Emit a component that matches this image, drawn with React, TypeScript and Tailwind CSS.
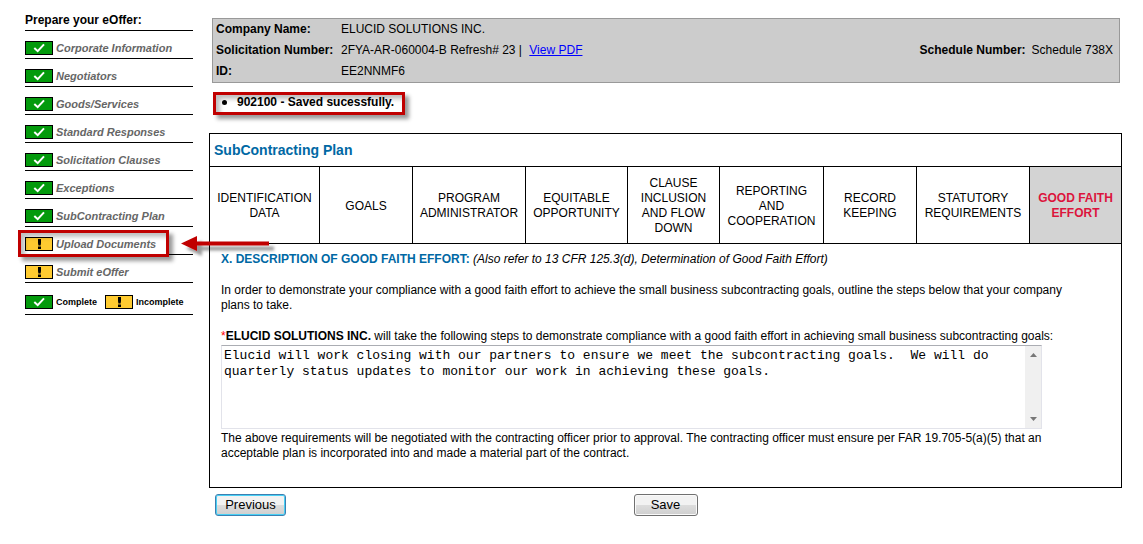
import type { ReactNode } from "react";

type Status = "complete" | "incomplete";

const STEPS: { label: string; status: Status; marked?: boolean }[] = [
  { label: "Corporate Information", status: "complete" },
  { label: "Negotiators", status: "complete" },
  { label: "Goods/Services", status: "complete" },
  { label: "Standard Responses", status: "complete" },
  { label: "Solicitation Clauses", status: "complete" },
  { label: "Exceptions", status: "complete" },
  { label: "SubContracting Plan", status: "complete" },
  { label: "Upload Documents", status: "incomplete", marked: true },
  { label: "Submit eOffer", status: "incomplete" },
];

const TABS = [
  "IDENTIFICATION DATA",
  "GOALS",
  "PROGRAM ADMINISTRATOR",
  "EQUITABLE OPPORTUNITY",
  "CLAUSE INCLUSION AND FLOW DOWN",
  "REPORTING AND COOPERATION",
  "RECORD KEEPING",
  "STATUTORY REQUIREMENTS",
  "GOOD FAITH EFFORT",
];

const PLAN_TEXT =
  "Elucid will work closing with our partners to ensure we meet the subcontracting goals.  We will do quarterly status updates to monitor our work in achieving these goals.";

function StatusIcon({ status }: { status: Status }) {
  return (
    <svg width="28" height="14" viewBox="0 0 28 14" className="shrink-0" aria-hidden="true">
      <rect
        x="0.5"
        y="0.5"
        width="27"
        height="13"
        fill={status === "complete" ? "#039a0c" : "#ffcb30"}
        stroke="#000"
      />
      {status === "complete" ? (
        <path d="M9.300 7l3.400 3.200L19 3.300" fill="none" stroke="#fff" strokeWidth="2" />
      ) : (
        <path d="M13 2h3v4l-.4 2.500h-2.200L13 6zM13 9.600h3V12h-3z" fill="#000" />
      )}
    </svg>
  );
}

function Arrow() {
  return (
    <svg
      width="104"
      height="28"
      viewBox="0 0 104 28"
      className="pointer-events-none absolute top-[6px] left-[155px] z-10"
      aria-hidden="true"
    >
      <defs>
        <filter id="arrow-shadow" x="-10%" y="-30%" width="120%" height="190%">
          <feDropShadow dx="5" dy="5" stdDeviation="1.5" floodColor="#000" floodOpacity="0.4" />
        </filter>
      </defs>
      <path d="M1 10.500L17 3v5.500h72v4H17V18z" fill="#c00000" filter="url(#arrow-shadow)" />
    </svg>
  );
}

function Sidebar() {
  return (
    <aside className="w-[168px] shrink-0">
      <h2 className="border-b border-black pb-[2px] text-[12px] leading-4 font-bold whitespace-nowrap">
        Prepare your eOffer:
      </h2>
      <ul>
        {STEPS.map((step) => (
          <li key={step.label} className="relative flex h-7 items-end border-b border-black pb-[3px]">
            <a
              href="#"
              className="flex h-[14px] items-center gap-[3px] text-[11px] font-bold whitespace-nowrap text-[#666] italic"
            >
              <StatusIcon status={step.status} />
              {step.label}
            </a>
            {step.marked && (
              <>
                <span className="pointer-events-none absolute top-[3px] -left-[7px] h-[27px] w-[151px] border-3 border-[#c00000] shadow-[4px_4px_4px_rgba(0,0,0,0.4),inset_4px_4px_4px_rgba(0,0,0,0.25)]" />
                <Arrow />
              </>
            )}
          </li>
        ))}
      </ul>
      <div className="flex h-8 items-end gap-2 border-b border-black pb-[5px] text-[9px] font-bold">
        <div className="flex h-[14px] items-center gap-[3px]">
          <StatusIcon status="complete" />
          Complete
        </div>
        <div className="flex h-[14px] items-center gap-[3px]">
          <StatusIcon status="incomplete" />
          Incomplete
        </div>
      </div>
    </aside>
  );
}

function OfferHeader() {
  return (
    <header className="mr-[2px] ml-[3px] flex items-center justify-between border border-[#999] bg-[#ccc] pr-[6px] pl-[3px] leading-[21px]">
      <dl className="grid grid-cols-[125px_auto]">
        <dt className="font-bold">Company Name:</dt>
        <dd>ELUCID SOLUTIONS INC.</dd>
        <dt className="font-bold whitespace-nowrap">Solicitation Number:</dt>
        <dd>
          2FYA-AR-060004-B Refresh# 23 |{" "}
          <a href="#" className="ml-1 text-[#0000ff] underline">
            View PDF
          </a>
        </dd>
        <dt className="font-bold">ID:</dt>
        <dd>EE2NNMF6</dd>
      </dl>
      <dl className="flex gap-[6px]">
        <dt className="font-bold">Schedule Number:</dt>
        <dd>Schedule 738X</dd>
      </dl>
    </header>
  );
}

function PushButton({ children, className }: { children: ReactNode; className: string }) {
  return (
    <button
      type="button"
      className={`h-[22px] rounded-[3px] border bg-linear-to-b from-[#f2f2f2] from-50% via-[#dddddd] via-50% to-[#cfcfcf] text-[13px] leading-5 ${className}`}
    >
      {children}
    </button>
  );
}

export default function App() {
  return (
    <div className="flex gap-4 bg-white pr-[21px] pb-7 pl-[25px] font-['Liberation_Sans',Arial,sans-serif] text-[12px] leading-[15px] text-black">
      <div className="pt-3">
        <Sidebar />
      </div>
      <main className="min-w-0 flex-1 pt-[18px]">
        <OfferHeader />

        <ul className="mt-[9px] ml-1 w-[192px] border-3 border-[#c00000] pb-[2px] shadow-[4px_4px_4px_rgba(0,0,0,0.4),inset_4px_4px_4px_rgba(0,0,0,0.25)]">
          <li className="flex items-center gap-[10px] pl-[6px] font-bold whitespace-nowrap">
            <span className="size-[5px] rounded-full bg-black" />
            902100 - Saved sucessfully.
          </li>
        </ul>

        <section className="mt-[18px] border border-black">
          <h1 className="border-b border-black px-1 py-[6px] text-[14px] leading-5 font-bold text-[#0068a4]">
            SubContracting Plan
          </h1>
          <nav className="grid min-h-[77px] grid-cols-[110fr_93fr_113fr_102fr_92fr_104fr_93fr_113fr_91fr] border-b border-black">
            {TABS.map((tab, i) => (
              <a
                key={tab}
                href="#"
                className={`flex items-center justify-center px-1 pt-[2px] text-center ${
                  i === TABS.length - 1
                    ? "bg-[#d3d3d3] font-bold text-[#dc143c]"
                    : "border-r border-black"
                }`}
              >
                {tab}
              </a>
            ))}
          </nav>

          <form className="pt-2 pr-[30px] pb-[26px] pl-[11px]">
            <p>
              <strong className="text-[#0068a4]">X. DESCRIPTION OF GOOD FAITH EFFORT:</strong>{" "}
              <em>(Also refer to 13 CFR 125.3(d), Determination of Good Faith Effort)</em>
            </p>
            <p className="mt-4">
              In order to demonstrate your compliance with a good faith effort to achieve the small
              business subcontracting goals, outline the steps below that your company plans to
              take.
            </p>
            <label htmlFor="plan" className="mt-4 block">
              <span className="text-[#ff0000]">*</span>
              <strong>ELUCID SOLUTIONS INC.</strong> will take the following steps to demonstrate
              compliance with a good faith effort in achieving small business subcontracting goals:
            </label>
            <div className="mt-[1px] flex h-[84px] w-[821px] max-w-full border border-[#e2e3ea] border-t-[#abadb3]">
              <textarea
                id="plan"
                defaultValue={PLAN_TEXT}
                className="min-w-0 flex-1 resize-none overflow-hidden px-[2px] py-[2px] font-['Liberation_Mono','Courier_New',monospace] text-[13px] leading-4 outline-none"
              />
              <div className="flex w-4 flex-col items-center justify-between bg-[#f0f0f0] py-[7px]">
                <svg width="7" height="4" viewBox="0 0 7 4" aria-hidden="true">
                  <path d="M3.500 0L7 4H0z" fill="#777" />
                </svg>
                <svg width="7" height="4" viewBox="0 0 7 4" aria-hidden="true">
                  <path d="M3.500 4L7 0H0z" fill="#777" />
                </svg>
              </div>
            </div>
            <p className="mt-[2px]">
              The above requirements will be negotiated with the contracting officer prior to
              approval. The contracting officer must ensure per FAR 19.705-5(a)(5) that an
              acceptable plan is incorporated into and made a material part of the contract.
            </p>
          </form>
        </section>

        <div className="mt-[6px] grid grid-cols-[1fr_auto_1fr] px-[6px]">
          <PushButton className="w-[71px] border-[#3c7fb1] shadow-[inset_0_0_0_1px_#48d0f5]">
            Previous
          </PushButton>
          <PushButton className="w-16 border-[#707070] shadow-[inset_0_0_0_1px_#fafafa]">
            Save
          </PushButton>
        </div>
      </main>
    </div>
  );
}
